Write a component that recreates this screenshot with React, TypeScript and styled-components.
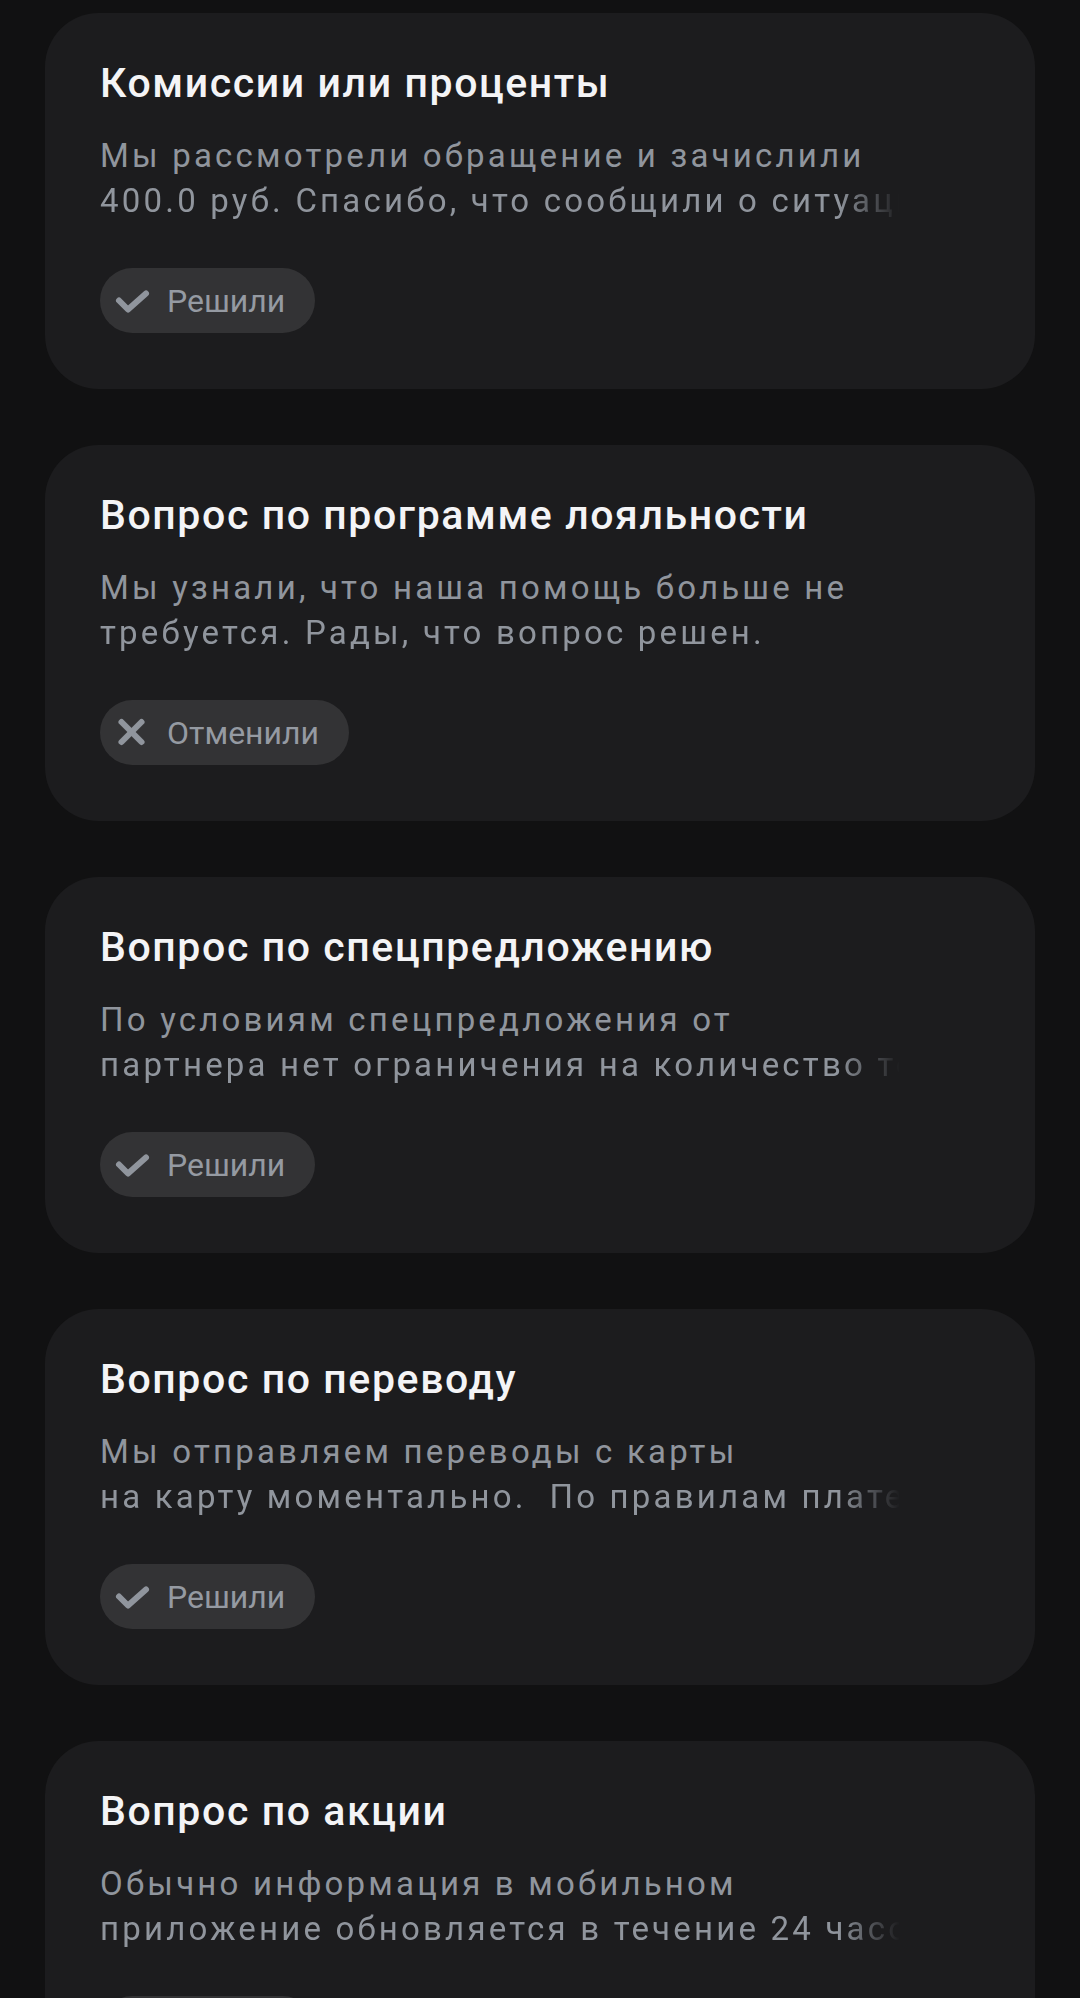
import * as React from 'react';
import styled, { createGlobalStyle } from 'styled-components';

type Status = 'solved' | 'cancelled';

type Ticket = {
  title: string;
  lines: [string, string];
  status: Status;
};

const tickets: Ticket[] = [
  {
    title: 'Комиссии или проценты',
    lines: [
      'Мы рассмотрели обращение и зачислили',
      '400.0 руб. Спасибо, что сообщили о ситуации',
    ],
    status: 'solved',
  },
  {
    title: 'Вопрос по программе лояльности',
    lines: [
      'Мы узнали, что наша помощь больше не',
      'требуется. Рады, что вопрос решен.',
    ],
    status: 'cancelled',
  },
  {
    title: 'Вопрос по спецпредложению',
    lines: [
      'По условиям спецпредложения от',
      'партнера нет ограничения на количество товаров',
    ],
    status: 'solved',
  },
  {
    title: 'Вопрос по переводу',
    lines: [
      'Мы отправляем переводы с карты',
      'на карту моментально.\u00a0\u00a0По правилам платежных систем',
    ],
    status: 'solved',
  },
  {
    title: 'Вопрос по акции',
    lines: [
      'Обычно информация в мобильном',
      'приложение обновляется в течение 24 часов',
    ],
    status: 'solved',
  },
];

const statusLabel: Record<Status, string> = {
  solved: 'Решили',
  cancelled: 'Отменили',
};

const GlobalStyle = createGlobalStyle`
  html, body {
    margin: 0;
    padding: 0;
    background: #111112;
  }
  body {
    font-family: Roboto, 'Noto Sans', 'Liberation Sans', sans-serif;
    -webkit-font-smoothing: antialiased;
  }
`;

const StatusIcon: React.FC<{ status: Status }> = ({ status }) => (
  <IconBox viewBox="0 0 40 40" fill="none">
    {status === 'solved' ? (
      <polyline points="7,19.5 16,28.5 34,12.5" />
    ) : (
      <>
        <line x1="9.5" y1="9" x2="29.5" y2="29" />
        <line x1="29.5" y1="9" x2="9.5" y2="29" />
      </>
    )}
  </IconBox>
);

const TicketCard: React.FC<{ ticket: Ticket }> = ({ ticket }) => (
  <Card>
    <Title>{ticket.title}</Title>
    <Body>
      <Line>{ticket.lines[0]}</Line>
      <Line $fade>{ticket.lines[1]}</Line>
    </Body>
    <Badge>
      <StatusIcon status={ticket.status} />
      <BadgeText>{statusLabel[ticket.status]}</BadgeText>
    </Badge>
  </Card>
);

const App: React.FC = () => {
  return (
    <>
      <GlobalStyle />
      <Page>
        {tickets.map((t) => (
          <TicketCard key={t.title} ticket={t} />
        ))}
      </Page>
    </>
  );
};

const Page = styled.main`
  display: flex;
  flex-direction: column;
  gap: 56px;
  padding: 13px 45px 56px;
  min-height: 100vh;
  box-sizing: border-box;
  background: #111112;
`;

const Card = styled.section`
  display: flex;
  flex-direction: column;
  align-items: flex-start;
  flex-shrink: 0;
  height: 376px;
  box-sizing: border-box;
  padding: 46px 55px 56px;
  background: #1c1c1e;
  border-radius: 54px;
`;

const Title = styled.h3`
  margin: 0;
  font-size: 41px;
  line-height: 48px;
  font-weight: 500;
  letter-spacing: 1.6px;
  color: #f4f4f6;
  white-space: nowrap;
`;

const Body = styled.div`
  display: flex;
  flex-direction: column;
  margin-top: 26px;
  width: 800px;
`;

const Line = styled.p<{ $fade?: boolean }>`
  margin: 0;
  font-size: 33px;
  line-height: 45px;
  letter-spacing: 3.2px;
  color: #90959d;
  white-space: nowrap;
  overflow: hidden;
  ${({ $fade }) =>
    $fade &&
    `
    -webkit-mask-image: linear-gradient(to right, #000 calc(100% - 62px), transparent);
    mask-image: linear-gradient(to right, #000 calc(100% - 62px), transparent);
  `}
`;

const Badge = styled.div`
  display: flex;
  align-items: center;
  gap: 15px;
  margin-top: 45px;
  height: 65px;
  box-sizing: border-box;
  padding: 0 30px 0 12px;
  border-radius: 33px;
  background: #333335;
`;

const IconBox = styled.svg`
  width: 40px;
  height: 40px;
  flex-shrink: 0;
  stroke: #90959d;
  stroke-width: 6;
  stroke-linecap: round;
  stroke-linejoin: round;
`;

const BadgeText = styled.span`
  font-size: 32px;
  line-height: 40px;
  color: #959aa2;
`;

export default App;
